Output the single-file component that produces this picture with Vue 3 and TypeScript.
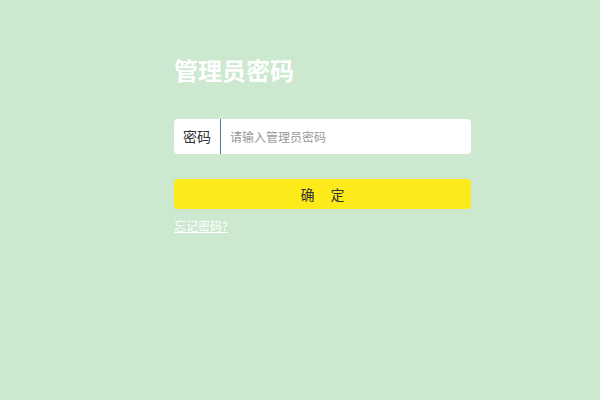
<script setup lang="ts">
import { ref } from 'vue'

const password = ref<string>('')
</script>

<template>
  <main class="page">
    <form class="login" @submit.prevent>
      <h1 class="title">管理员密码</h1>
      <div class="field">
        <label class="label" for="password">密码</label>
        <input id="password" v-model="password" class="input" type="password" placeholder="请输入管理员密码" />
      </div>
      <button class="submit" type="submit">
        <span>确</span>
        <span>定</span>
      </button>
      <a class="forgot" href="#">忘记密码?</a>
    </form>
  </main>
</template>

<style>
body {
  background: #cce8cf;
}
</style>

<style scoped>
.page {
  display: flex;
  justify-content: center;
  box-sizing: border-box;
  min-height: 100vh;
  padding: 52px 24px 24px 69px;
  font-family: "Noto Sans CJK SC", sans-serif;
}

.login {
  display: flex;
  flex-direction: column;
  width: 100%;
  max-width: 297px;
}

.title {
  margin: 0 0 31px;
  color: #fff;
  font-size: 24px;
  font-weight: 700;
  line-height: 36px;
}

.field {
  display: flex;
  height: 35px;
  margin-bottom: 25px;
  overflow: hidden;
  background: #fff;
  border-radius: 4px;
}

.label {
  padding: 0 9px;
  border-right: 1px solid #4f7896;
  color: #333;
  font-size: 14px;
  line-height: 34px;
}

.input {
  flex: 1;
  min-width: 0;
  padding: 0 9px;
  border: 0;
  outline: 0;
  background: transparent;
  color: #333;
  font-family: inherit;
  font-size: 12px;
}

.input::placeholder {
  color: #999;
  opacity: 1;
}

.submit {
  display: flex;
  align-items: center;
  justify-content: center;
  gap: 16px;
  height: 30px;
  margin-bottom: 8px;
  padding: 0;
  border: 0;
  border-radius: 4px;
  background: #fcea1a;
  color: #333;
  font-family: inherit;
  font-size: 14px;
  cursor: pointer;
}

.forgot {
  align-self: flex-start;
  color: #fff;
  font-size: 12px;
  line-height: 18px;
}
</style>
